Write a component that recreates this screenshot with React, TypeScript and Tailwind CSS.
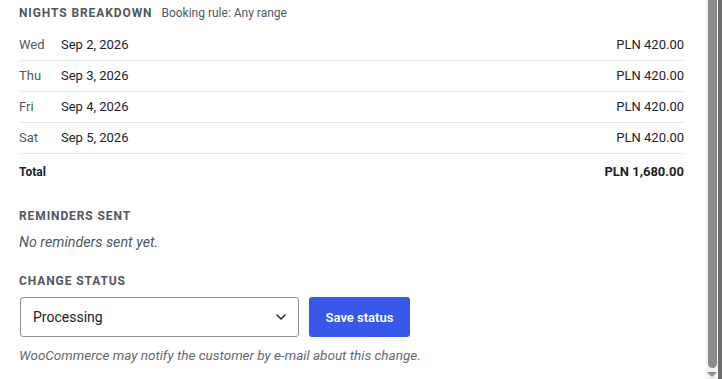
const nights = [
  { day: "Wed", date: "Sep 2, 2026", price: "PLN 420.00" },
  { day: "Thu", date: "Sep 3, 2026", price: "PLN 420.00" },
  { day: "Fri", date: "Sep 4, 2026", price: "PLN 420.00" },
  { day: "Sat", date: "Sep 5, 2026", price: "PLN 420.00" },
];

function SectionTitle({ children }: { children: React.ReactNode }) {
  return (
    <h3 className="text-[12px] font-bold uppercase tracking-[0.9px] text-[#50575e]">{children}</h3>
  );
}

export default function App() {
  return (
    <div
      className="flex h-[379px] w-[722px] overflow-hidden bg-white"
      style={{ fontFamily: "Roboto, 'Liberation Sans', sans-serif" }}
    >
      <div className="flex-1 pl-[19px] pr-[22px]">
        <div className="flex h-[26px] items-center gap-[9px]">
          <SectionTitle>Nights breakdown</SectionTitle>
          <span className="text-[12px] text-[#50575e]">Booking rule: Any range</span>
        </div>

        <div className="mt-[4px]">
          {nights.map((n) => (
            <div
              key={n.date}
              className="flex h-[31px] items-center border-b border-[#e8e8e8] text-[13px]"
            >
              <span className="w-[42px] text-[#50575e]">{n.day}</span>
              <span className="flex-1 text-[#1d2327]">{n.date}</span>
              <span className="text-[#1d2327]">{n.price}</span>
            </div>
          ))}
          <div className="flex h-[36px] items-center text-[12px] font-bold text-[#1d2327]">
            <span className="flex-1">Total</span>
            <span className="text-[13px]">PLN 1,680.00</span>
          </div>
        </div>

        <div className="mt-[17px]">
          <SectionTitle>Reminders sent</SectionTitle>
          <p className="mt-[7px] text-[14.3px] italic text-[#50575e]">No reminders sent yet.</p>
        </div>

        <div className="mt-[19px]">
          <SectionTitle>Change status</SectionTitle>
          <div className="mt-[7px] flex items-center gap-[10px]">
            <div className="ml-[1px] flex h-[40px] w-[279px] items-center justify-between rounded-[3px] border border-[#8c8f94] pl-[12px] pr-[11px] text-[14px] text-[#1d2327]">
              <span>Processing</span>
              <svg width="12" height="12" viewBox="0 0 24 24" fill="none" stroke="#1d2327" strokeWidth="2.8" strokeLinecap="round" strokeLinejoin="round">
                <path d="M4 8l8 8 8-8" />
              </svg>
            </div>
            <button className="h-[40px] w-[101px] rounded-[3px] bg-[#3858e9] text-[13px] font-semibold text-white">
              Save status
            </button>
          </div>
          <p className="mt-[8px] text-[13.5px] italic text-[#646970]">
            WooCommerce may notify the customer by e-mail about this change.
          </p>
        </div>
      </div>

      <div className="flex h-full w-[16px] bg-[#f1f1f1]">
        <div className="flex h-full w-[12px] flex-col items-center pt-0 pb-[2px]">
          <div className="w-[9px] flex-1 rounded-b-[5px] bg-[#8b8b8b]" />
          <div className="mt-[4px] h-0 w-0 border-x-[5px] border-t-[5px] border-x-transparent border-t-[#8b8b8b]" />
        </div>
        <div className="h-full w-[4px] bg-[#6d6d6d]" />
      </div>
    </div>
  );
}
